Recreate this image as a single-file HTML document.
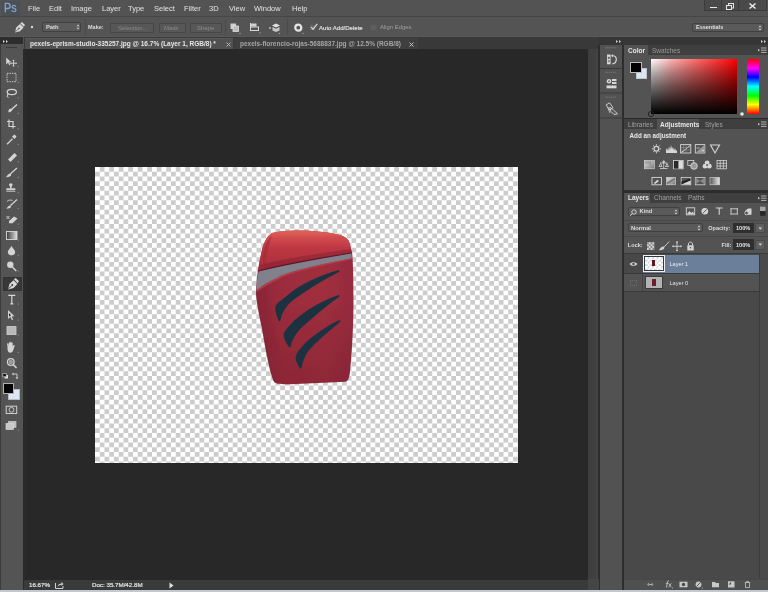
<!DOCTYPE html>
<html><head><meta charset="utf-8">
<style>
*{margin:0;padding:0;box-sizing:border-box}
html,body{width:768px;height:592px;overflow:hidden;background:#282828;font-family:"Liberation Sans",sans-serif;color:#d8d8d8}
.a{position:absolute}
.t{position:absolute;white-space:nowrap;line-height:1}
.m{font-size:7.5px;color:#e2e2e2;top:5.4px}
.b{font-weight:bold}
svg{position:absolute;overflow:visible}
.btn{position:absolute;background:#575757;border:1px solid #474747;border-radius:1px}
.dd{position:absolute;background:#5b5b5b;border:1px solid #404040;border-radius:2px}
#wrap{position:absolute;left:0;top:0;width:768px;height:592px;background:#282828;filter:blur(0.3px)}
</style></head><body><div id="wrap">
<!-- ============ MENU BAR ============ -->
<div class="a" style="left:0;top:0;width:768px;height:17px;background:#535353;border-bottom:1px solid #474747"></div>
<div class="a" style="left:1.5px;top:1px;width:18px;height:14.5px;background:#4b4f56"></div><div class="t" style="left:4.2px;top:2.2px;font-size:12.7px;color:#84a6cf;-webkit-text-stroke:0.3px #84a6cf;transform:scaleX(0.85);transform-origin:0 0">Ps</div>
<div class="t m" style="left:28px">File</div>
<div class="t m" style="left:49px">Edit</div>
<div class="t m" style="left:71px">Image</div>
<div class="t m" style="left:102px">Layer</div>
<div class="t m" style="left:128px">Type</div>
<div class="t m" style="left:154px">Select</div>
<div class="t m" style="left:184px">Filter</div>
<div class="t m" style="left:209px">3D</div>
<div class="t m" style="left:229px">View</div>
<div class="t m" style="left:254px">Window</div>
<div class="t m" style="left:292px">Help</div>
<!-- window controls -->
<div class="a" style="left:704px;top:0;width:18px;height:11px;background:#4a4a4a;border:1px solid #3c3c3c;border-top:none"></div>
<div class="a" style="left:722px;top:0;width:17px;height:11px;background:#4a4a4a;border:1px solid #3c3c3c;border-top:none;border-left:none"></div>
<div class="a" style="left:739px;top:0;width:28px;height:11px;background:#4a4a4a;border:1px solid #3c3c3c;border-top:none;border-left:none"></div>
<div class="a" style="left:710px;top:6.5px;width:7px;height:1.5px;background:#e8e8e8"></div>
<svg style="left:726px;top:2.5px" width="8" height="7"><rect x="2.5" y="0.5" width="5" height="4.5" fill="none" stroke="#e0e0e0" stroke-width="1"/><rect x="0.5" y="2.5" width="5" height="4" fill="#4a4a4a" stroke="#e8e8e8" stroke-width="1"/></svg>
<svg style="left:749px;top:3px" width="7" height="6"><path d="M0.5 0.5L6.5 5.5M6.5 0.5L0.5 5.5" stroke="#ececec" stroke-width="1.5"/></svg>

<!-- ============ OPTIONS BAR ============ -->
<div class="a" style="left:0;top:17px;width:768px;height:20px;background:#545454;border-bottom:1px solid #5a5a5a"></div>
<!-- pen icon -->
<svg style="left:14px;top:22px" width="11" height="11" viewBox="0 0 11 11"><path d="M1 10.5 L2.2 5.5 L6 2 L9.5 5.5 L6 9.2 Z" fill="#d8d8d8"/><path d="M6.3 1.2 L8 0 L11 3 L9.8 4.8Z" fill="#d8d8d8"/><path d="M1.3 10 L4.3 7" stroke="#5a5a5a" stroke-width="0.8"/><circle cx="4.8" cy="6.4" r="0.9" fill="#5a5a5a"/></svg>
<svg style="left:29.5px;top:25px" width="4" height="4"><circle cx="2" cy="2" r="1.2" fill="#d8d8d8"/></svg>

<div class="dd" style="left:42px;top:22px;width:39px;height:10px"></div>
<div class="t b" style="left:46px;top:24.5px;font-size:5.8px;color:#dedede">Path</div>
<svg style="left:76px;top:24px" width="4" height="6"><path d="M0.5 2.3L2 0.5L3.5 2.3ZM0.5 3.7L2 5.5L3.5 3.7Z" fill="#cfcfcf"/></svg>
<div class="a" style="left:84.5px;top:19px;width:1px;height:16px;background:#4a4a4a"></div>
<div class="t b" style="left:88px;top:24.8px;font-size:5.5px;color:#dcdcdc">Make:</div>
<div class="btn" style="left:109.5px;top:22.5px;width:44px;height:10px"></div>
<div class="t" style="left:118px;top:24.8px;font-size:6px;color:#8a8a8a">Selection...</div>
<div class="btn" style="left:158.5px;top:22.5px;width:27px;height:10px"></div>
<div class="t" style="left:164px;top:24.8px;font-size:6px;color:#8a8a8a">Mask</div>
<div class="btn" style="left:190px;top:22.5px;width:32px;height:10px"></div>
<div class="t" style="left:197px;top:24.8px;font-size:6px;color:#8a8a8a">Shape</div>
<div class="a" style="left:225px;top:19px;width:1px;height:16px;background:#4a4a4a"></div>
<!-- path ops icons -->
<svg style="left:230px;top:22.5px" width="11" height="11"><rect x="0.5" y="0.5" width="5.5" height="5.5" fill="#cfcfcf"/><rect x="3" y="3" width="5.5" height="5.5" fill="#bdbdbd" stroke="#e0e0e0" stroke-width="0.8"/><circle cx="10" cy="10.3" r="0.6" fill="#bbb"/></svg>
<svg style="left:249.5px;top:23px" width="11" height="11"><rect x="0.5" y="0.5" width="6" height="3" fill="#d0d0d0"/><rect x="0.5" y="4" width="8" height="3.5" fill="none" stroke="#d8d8d8" stroke-width="1"/><rect x="0" y="0" width="1" height="8" fill="#d8d8d8"/><circle cx="10" cy="9.8" r="0.6" fill="#bbb"/></svg>
<svg style="left:268px;top:22.5px" width="13" height="11"><path d="M4 2.5L8 0.5L12 2.5L8 4.5Z" fill="#e0e0e0"/><path d="M4.5 4L8 5.8L11.5 4V7.5L8 9L4.5 7.5Z" fill="#c8c8c8"/><path d="M1 5H3M2 4V6" stroke="#ccc" stroke-width="0.8"/><circle cx="11.5" cy="10.3" r="0.6" fill="#bbb"/></svg>
<div class="a" style="left:287px;top:19px;width:1px;height:16px;background:#4a4a4a"></div>
<svg style="left:293.5px;top:23.5px" width="10" height="10"><circle cx="4.3" cy="3.7" r="3" fill="none" stroke="#e6e6e6" stroke-width="2.2"/><circle cx="9" cy="9.3" r="0.6" fill="#bbb"/></svg>
<div class="a" style="left:309px;top:23.5px;width:7px;height:7px;background:#666;border:1px solid #555"></div>
<svg style="left:309.5px;top:22.5px" width="8" height="8"><path d="M1.2 4L3 6.3L7.3 0.8" fill="none" stroke="#dedede" stroke-width="1.1"/></svg>
<div class="t" style="left:319px;top:24.5px;font-size:6.05px;color:#e0e0e0;-webkit-text-stroke:0.15px #e0e0e0">Auto Add/Delete</div>
<div class="a" style="left:370px;top:23.5px;width:6.5px;height:7px;background:#5e5e5e;border:1px solid #585858"></div>
<div class="t" style="left:380px;top:24.8px;font-size:5.9px;color:#a0a0a0">Align Edges</div>
<!-- essentials -->
<div class="dd" style="left:692px;top:22.5px;width:72px;height:9.5px;background:#5a5a5a"></div>
<div class="t b" style="left:696px;top:24.8px;font-size:5.5px;color:#e0e0e0">Essentials</div>
<svg style="left:758px;top:24.5px" width="4" height="6"><path d="M0.5 2.3L2 0.5L3.5 2.3ZM0.5 3.7L2 5.5L3.5 3.7Z" fill="#d0d0d0"/></svg>

<!-- ============ TAB ROW ============ -->
<div class="a" style="left:23px;top:37px;width:575px;height:12px;background:#393939"></div>
<div class="a" style="left:24.5px;top:37.8px;width:208.5px;height:11.3px;background:#505050;border-top:1px solid #5a5a5a"></div>
<div class="t b" style="left:30px;top:41px;font-size:6.5px;color:#e4e4e4">pexels-eprism-studio-335257.jpg @ 16.7% (Layer 1, RGB/8) *</div>
<svg style="left:225.5px;top:42px" width="5" height="5"><path d="M0.5 0.5L4.5 4.5M4.5 0.5L0.5 4.5" stroke="#bdbdbd" stroke-width="0.9"/></svg>
<div class="a" style="left:234px;top:37.5px;width:184px;height:11.5px;background:#3f3f3f"></div>
<div class="t b" style="left:240px;top:41px;font-size:6.5px;color:#a4a4a4">pexels-florencio-rojas-5688837.jpg @ 12.5% (RGB/8)</div>
<svg style="left:409px;top:42px" width="5" height="5"><path d="M0.5 0.5L4.5 4.5M4.5 0.5L0.5 4.5" stroke="#d0d0d0" stroke-width="0.9"/></svg>

<!-- ============ LEFT TOOLBAR ============ -->
<div class="a" style="left:0;top:37px;width:23.8px;height:553px;background:#545454;border-left:1px solid #3c3c3c"></div>
<div class="a" style="left:0;top:37px;width:23px;height:6.5px;background:#2d2d2d"></div>
<svg style="left:2.5px;top:40px" width="6" height="3"><path d="M0 0L2 1.5L0 3ZM3 0L5 1.5L3 3Z" fill="#cfcfcf"/></svg>
<div class="a" style="left:6px;top:47px;width:11px;height:1px;background:#3a3a3a"></div>
<svg style="left:0;top:0" width="24" height="440" viewBox="0 0 24 440">
<g fill="#d4d4d4" stroke="none">
<!-- move 61.5 -->
<path d="M6.2 57.5L6.2 64.5L8 62.8L9.3 65.3L10.3 64.8L9.2 62.3L11.3 62.2Z"/>
<path d="M13.5 59.5L14.8 61H14V62.7H15.7V62L17.2 63.3L15.7 64.6V63.8H14V65.5H14.8L13.5 67L12.2 65.5H13V63.8H11.3V64.6L9.8 63.3L11.3 62V62.7H13V61H12.2Z" fill="#c8c8c8"/>
<!-- marquee 77.5 -->
<rect x="7" y="73.3" width="9" height="8.4" fill="none" stroke="#c8c8c8" stroke-width="1" stroke-dasharray="1.5 1"/>
<!-- lasso 93 -->
<ellipse cx="11.8" cy="92" rx="4.6" ry="2.7" fill="none" stroke="#d4d4d4" stroke-width="1.2"/>
<path d="M8 94L7 96.5L8.5 97.5" fill="none" stroke="#d4d4d4" stroke-width="1"/>
<!-- quick select 108.5 -->
<path d="M17 104.5L11.5 109.5" stroke="#d8d8d8" stroke-width="1.4"/>
<path d="M8.5 110C10 108 12 108.5 12.3 110C11.5 111.8 9.5 112.5 8.5 112.3Z"/>
<!-- crop 124 -->
<path d="M9 119.5V126.5H15.5M7 121.5H13V128.5" fill="none" stroke="#d4d4d4" stroke-width="1.2"/>
<!-- eyedropper 139.5 -->
<path d="M7 144.3L12.5 138.8" stroke="#d4d4d4" stroke-width="1.3"/>
<path d="M12 136.5L14.5 134.5L16.5 136.5L14.5 139Z"/>
<!-- healing 157 -->
<path d="M8 159.5L14.5 153L17 155.5L10.5 162Z"/>
<!-- brush 172.5 -->
<path d="M17 168L10.5 173.8" stroke="#d4d4d4" stroke-width="1.2"/>
<path d="M6 177.3C7 175.5 8.5 173.5 10.5 173.5C11.5 174.3 11.3 175.7 10.3 176.3C9 177 7.5 177.3 6 177.3Z"/>
<!-- stamp 188 -->
<ellipse cx="10.8" cy="184.8" rx="1.8" ry="1.6"/>
<rect x="10" y="185.5" width="1.6" height="3"/>
<rect x="6.3" y="188.3" width="9" height="2"/>
<rect x="6.3" y="191" width="9" height="1" fill="#a8a8a8"/>
<!-- history brush 204 -->
<path d="M17 199.5L10.5 205.5" stroke="#d4d4d4" stroke-width="1.2"/>
<path d="M6.5 208.8C7.5 207 8.5 205.5 10.5 205.3C11.3 206 11 207.5 10 208C9 208.6 7.8 208.8 6.5 208.8Z"/>
<path d="M7 201.5C8.5 199.8 11 199.7 12.5 200.5" fill="none" stroke="#d4d4d4" stroke-width="0.9"/>
<!-- eraser 219.5 -->
<path d="M6.5 216L9.5 219M9.5 216L6.5 219" stroke="#d4d4d4" stroke-width="0.9"/>
<path d="M9 221L14 216.5L17.5 218.5L12.5 223.3H9Z"/>
<!-- gradient 235.5 -->
<rect x="6.5" y="231.5" width="10.5" height="8" fill="url(#gr)" stroke="#d8d8d8" stroke-width="0.9"/>
<!-- drop 250.5 -->
<path d="M11.5 246C12.8 248.2 15.2 250.5 15.2 252.3C15.2 254.3 13.5 255.3 11.5 255.3C9.5 255.3 7.8 254.3 7.8 252.3C7.8 250.5 10.2 248.2 11.5 246Z"/>
<!-- dodge 266.5 -->
<circle cx="10.3" cy="264.8" r="3.2"/>
<path d="M12.3 267L16.3 271" stroke="#d4d4d4" stroke-width="1.5"/>
<!-- T 299.5 -->
<path d="M8.3 295.3H15.3M11.8 295.3V303.8M10.3 303.8H13.3" fill="none" stroke="#d8d8d8" stroke-width="1.2"/>
<!-- path select 315 -->
<path d="M8 310L8 319L10.3 317L12 320.2L13.2 319.6L11.6 316.5L14.5 316.2Z" fill="#d0d0d0"/>
<path d="M9 313L9 316.5L11 315.3Z" fill="#2d2d2d"/>
<!-- rect 330.5 -->
<rect x="7" y="326.6" width="9" height="8" fill="#b8b8b8" stroke="#d0d0d0" stroke-width="0.8"/>
<!-- hand 348 -->
<path d="M7.5 346.5L7 343.8C7 343 8.2 343 8.4 343.8L8.8 345.8V342.8C8.8 342 10.1 342 10.1 342.8V345.5V342.4C10.1 341.6 11.4 341.6 11.4 342.4V345.5V343C11.4 342.2 12.7 342.2 12.7 343V346.5L13.5 345.3C14 344.5 15 345 14.7 345.8L13.2 350.2C12.8 351.8 11.8 352.7 10.2 352.7C8.5 352.7 7.8 351.5 7.5 349.5Z"/>
<!-- zoom 363.7 -->
<circle cx="10.8" cy="362" r="3.3" fill="none" stroke="#d4d4d4" stroke-width="1.3"/>
<circle cx="10.8" cy="362" r="2.2" fill="#a0a0a0"/>
<path d="M13.2 364.5L16.5 368" stroke="#d4d4d4" stroke-width="1.6"/>
<!-- default colors -->
<rect x="4.5" y="375" width="3.5" height="3.5" fill="#e0e0e0"/>
<rect x="2.8" y="373.3" width="3.5" height="3.5" fill="#1a1a1a" stroke="#d0d0d0" stroke-width="0.6"/>
<!-- swap -->
<path d="M13 374H17V378" fill="none" stroke="#d4d4d4" stroke-width="0.9"/>
<path d="M11.8 374L13.5 372.5V375.5ZM17 379.3L15.5 377.6H18.5Z"/>
<!-- quick mask 410 -->
<rect x="6.2" y="406.2" width="10.5" height="7.3" fill="none" stroke="#d0d0d0" stroke-width="1"/>
<circle cx="11.5" cy="409.8" r="2.4" fill="none" stroke="#d0d0d0" stroke-width="0.9"/>
<!-- screen mode 425.5 -->
<rect x="8.5" y="421.3" width="7.5" height="6" fill="#bdbdbd" stroke="#cfcfcf" stroke-width="0.6"/>
<rect x="6" y="423.3" width="7.5" height="6.3" fill="#c8c8c8" stroke="#dadada" stroke-width="0.6"/>
</g>
<defs><linearGradient id="gr"><stop offset="0" stop-color="#3a3a3a"/><stop offset="1" stop-color="#e0e0e0"/></linearGradient></defs>
<!-- dots -->
<g fill="#9a9a9a">
<circle cx="18.3" cy="66.5" r="0.6"/><circle cx="18.3" cy="82.3" r="0.6"/><circle cx="18.3" cy="97.8" r="0.6"/><circle cx="18.3" cy="113.3" r="0.6"/><circle cx="18.3" cy="128.8" r="0.6"/><circle cx="18.3" cy="144.5" r="0.6"/><circle cx="18.3" cy="161.8" r="0.6"/><circle cx="18.3" cy="177.3" r="0.6"/><circle cx="18.3" cy="192.8" r="0.6"/><circle cx="18.3" cy="208.5" r="0.6"/><circle cx="18.3" cy="224" r="0.6"/><circle cx="18.3" cy="240" r="0.6"/><circle cx="18.3" cy="255.3" r="0.6"/><circle cx="18.3" cy="271" r="0.6"/><circle cx="18.3" cy="288" r="0.6"/><circle cx="18.3" cy="304" r="0.6"/><circle cx="18.3" cy="320" r="0.6"/><circle cx="18.3" cy="335" r="0.6"/><circle cx="18.3" cy="352.5" r="0.6"/><circle cx="18.3" cy="430" r="0.6"/>
</g>
</svg>
<div class="a" style="left:2.5px;top:276.5px;width:19.5px;height:14.5px;background:#383838;border:1px solid #333"></div>
<svg style="left:6.5px;top:278px" width="12" height="12" viewBox="0 0 11 11"><path d="M1 10.5 L2.2 5.5 L6 2 L9.5 5.5 L6 9.2 Z" fill="#d8d8d8"/><path d="M6.3 1.2 L8 0 L11 3 L9.8 4.8Z" fill="#d8d8d8"/><path d="M1.3 10 L4.3 7" stroke="#383838" stroke-width="0.8"/><circle cx="4.8" cy="6.4" r="0.9" fill="#383838"/></svg>
<div class="a" style="left:8.4px;top:388.7px;width:11.6px;height:11.3px;background:#dde6f4;border:1px solid #b8bcc4"></div>
<div class="a" style="left:3px;top:383px;width:10.5px;height:10.5px;background:#050505;border:1px solid #b0b0b0"></div>


<!-- ============ STATUS BAR ============ -->
<div class="a" style="left:23px;top:49px;width:2px;height:541px;background:#2a2a2a"></div>
<div class="a" style="left:24px;top:579.5px;width:564px;height:11px;background:#3a3a3a"></div>
<div class="t" style="left:29px;top:582px;font-size:6.2px;color:#e4e4e4;-webkit-text-stroke:0.2px #e4e4e4">16.67%</div>
<svg style="left:54.5px;top:581px" width="9" height="8"><path d="M0.5 2V7.5H8V5" fill="none" stroke="#d0d0d0" stroke-width="1"/><path d="M2.5 6C3 3.5 4.5 2.5 6.5 2.5V1L8.5 3L6.5 5V3.8C5 3.8 3.8 4.5 2.5 6Z" fill="#d0d0d0"/></svg>

<div class="t" style="left:92px;top:582px;font-size:6.2px;color:#e4e4e4;-webkit-text-stroke:0.2px #e4e4e4">Doc: 35.7M/42.8M</div>
<svg style="left:168.5px;top:581.5px" width="5" height="7"><path d="M0.5 0.5L4.5 3.5L0.5 6.5Z" fill="#e0e0e0"/></svg>

<!-- ============ V STRIP ============ -->
<div class="a" style="left:588px;top:49px;width:10.5px;height:541px;background:linear-gradient(to right,#3c3c3c,#444)"></div>

<!-- ============ DOCK ============ -->
<div class="a" style="left:598px;top:37px;width:170px;height:553px;background:#2d2d2d"></div><div class="a" style="left:598px;top:37px;width:170px;height:7.5px;background:#363636"></div>
<svg style="left:615.5px;top:39.5px" width="6" height="3"><path d="M0 0L2 1.5L0 3ZM3 0L5 1.5L3 3Z" fill="#cfcfcf"/></svg>
<svg style="left:760.5px;top:39.5px" width="6" height="3"><path d="M0 0L2 1.5L0 3ZM3 0L5 1.5L3 3Z" fill="#cfcfcf"/></svg>
<div class="a" style="left:600px;top:44.5px;width:22px;height:546px;background:#525252"></div>
<svg style="left:598px;top:44px" width="26" height="80" viewBox="598 44 26 80">
<g stroke="#3a3a3a" stroke-width="1"><path d="M600 68.5H622M600 93H622M600 118H622"/></g>
<g stroke="#8a8a8a" stroke-width="0.8" stroke-dasharray="1 0.8"><path d="M605.5 47.8H616.5M605.5 72.3H616.5M605.5 97.2H616.5"/></g>
<!-- icon1 history-like -->
<g fill="#d8d8d8">
<rect x="607" y="54.5" width="3.6" height="9.8"/>
<rect x="607.8" y="56.8" width="2" height="2.2" fill="#6a6a6a"/>
<rect x="607.8" y="60" width="2" height="2.2" fill="#8a8a8a"/>
<path d="M612 55.5C615.5 55.5 616.5 57.5 616.3 59.8C616 62.2 614.5 63.8 612.3 63.8" fill="none" stroke="#d8d8d8" stroke-width="1.2"/>
<path d="M611 55.8L613 54V57.6Z"/>
<!-- icon2 -->
<circle cx="609" cy="81.2" r="2.3"/>
<circle cx="609" cy="81.2" r="1" fill="#777"/>
<rect x="612" y="79" width="4.5" height="2"/><rect x="612" y="82" width="4.5" height="2"/>
<rect x="606.5" y="85.5" width="10" height="2.8"/>
<!-- icon3 -->
<path d="M606 105L609.5 102.8L613 107.5L610 110Z" fill="none" stroke="#d8d8d8" stroke-width="0.9"/>
<path d="M609.8 107.2L613.5 110L617.5 113.8L614 114.5L610.5 111Z" fill="none" stroke="#d8d8d8" stroke-width="0.9"/>
<path d="M607.5 107L610 113" stroke="#d8d8d8" stroke-width="0.8"/>
</g>
</svg>


<!-- color panel -->
<div class="a" style="left:624px;top:45px;width:144px;height:10px;background:#3f3f3f"></div>
<div class="a" style="left:624px;top:45px;width:24px;height:10px;background:#535353"></div>
<div class="t b" style="left:628px;top:47.5px;font-size:6.5px;color:#e6e6e6">Color</div>
<div class="t" style="left:652px;top:47.5px;font-size:6.5px;color:#9a9a9a">Swatches</div>
<div class="a" style="left:624px;top:55px;width:144px;height:63px;background:#535353"></div>

<svg style="left:758px;top:47px" width="9" height="7"><path d="M3 1H8.5M3 3.2H8.5M3 5.4H8.5" stroke="#bdbdbd" stroke-width="0.9"/><path d="M0 1.8L2 3.2L0 4.6Z" fill="#bdbdbd"/></svg>
<div class="a" style="left:635.5px;top:67.5px;width:11.5px;height:11.5px;background:#dbe5f4;border:1px solid #c0c4ca"></div>
<div class="a" style="left:630px;top:61.5px;width:11.5px;height:11.5px;background:#020202;border:1px solid #bdbdbd"></div>
<div class="a" style="left:651px;top:59px;width:86px;height:55px;background:linear-gradient(to bottom,rgba(0,0,0,0) 0%,rgba(0,0,0,.3) 25%,rgba(0,0,0,.56) 50%,rgba(0,0,0,.79) 75%,#000 100%),linear-gradient(to right,#fff 0%,#ffadad 25%,#ff7070 50%,#ff3838 75%,#f00 100%)"></div>
<svg style="left:647px;top:110px" width="8" height="8"><circle cx="4" cy="4" r="2.6" fill="none" stroke="#222" stroke-width="1"/></svg>
<div class="a" style="left:746.5px;top:59px;width:12.5px;height:54.5px;background:linear-gradient(to bottom,#ff0000 0%,#ff00ff 17%,#0000ff 33%,#00ffff 50%,#00ff00 67%,#ffff00 83%,#ff0000 100%)"></div>
<svg style="left:739px;top:111px" width="6" height="6"><circle cx="3" cy="3" r="1.8" fill="#e8e8e8"/></svg>
<div class="a" style="left:624px;top:118px;width:144px;height:1px;background:#2b2b2b"></div>


<!-- adjustments panel -->
<div class="a" style="left:624px;top:119px;width:144px;height:10px;background:#3f3f3f"></div>
<div class="a" style="left:657px;top:119px;width:42px;height:10px;background:#535353"></div>
<div class="t" style="left:628px;top:121.5px;font-size:6.5px;color:#a0a0a0">Libraries</div>
<div class="t b" style="left:660px;top:121.5px;font-size:6.5px;color:#e6e6e6">Adjustments</div>
<div class="t" style="left:705px;top:121.5px;font-size:6.5px;color:#a0a0a0">Styles</div>
<div class="a" style="left:624px;top:129px;width:144px;height:61px;background:#535353"></div>
<div class="t b" style="left:629.5px;top:132.5px;font-size:6.3px;color:#e8e8e8">Add an adjustment</div>
<svg style="left:758px;top:121px" width="9" height="7"><path d="M3 1H8.5M3 3.2H8.5M3 5.4H8.5" stroke="#bdbdbd" stroke-width="0.9"/><path d="M0 1.8L2 3.2L0 4.6Z" fill="#bdbdbd"/></svg>
<svg style="left:640px;top:140px" width="92" height="50" viewBox="640 140 92 50">
<defs>
<linearGradient id="g1" x1="0" x2="1"><stop offset="0" stop-color="#555"/><stop offset="1" stop-color="#e8e8e8"/></linearGradient>
<linearGradient id="g2" x1="0" y1="0" x2="1" y2="1"><stop offset="0" stop-color="#e0e0e0"/><stop offset="1" stop-color="#777"/></linearGradient>
</defs>
<g fill="#d6d6d6" stroke="#d6d6d6">
<!-- row1 -->
<circle cx="656.4" cy="148.8" r="2.4" fill="none" stroke-width="1.2"/>
<path d="M656.4 144.2V145.5M656.4 152.1V153.4M651.8 148.8H653.1M659.7 148.8H661M653.1 145.5L654 146.4M658.8 151.2L659.7 152.1M659.7 145.5L658.8 146.4M654 151.2L653.1 152.1" stroke-width="1"/>
<path d="M666 153V150L667 148L668 151L669 146.5L670 150L671 145L672 149L673 147L674 150.5L675 148L676 151L677 150V153Z" stroke="none"/>
<rect x="680.6" y="144.6" width="10.2" height="8.4" fill="none" stroke-width="0.9"/>
<path d="M681 152.5C684 151 687 148 690.5 145" fill="none" stroke-width="1"/>
<path d="M681 147.5H690M681 150H690M683.5 145V152.6M686 145V152.6" stroke="#9a9a9a" stroke-width="0.5"/>
<rect x="695.3" y="144.6" width="9.5" height="8.4" fill="none" stroke-width="0.9"/>
<path d="M695.5 152.8L704.6 144.8V152.8Z" stroke="none" fill="#999"/>
<path d="M696.5 148H699.5M702 150.5H704M703 149.5V151.5" stroke-width="0.8"/>
<path d="M710.5 145H719.5L715 153Z" fill="none" stroke-width="1.1"/>
<!-- row2 -->
<rect x="644.3" y="160.5" width="10.2" height="8.3" fill="url(#g2)" stroke-width="0.6"/>
<path d="M646 161V164M648 161V163.5M650 161V164.5" stroke="#666" stroke-width="0.7"/>
<path d="M663.7 161.5V168.5M660 168.5H667.5M660 163L667.5 163" stroke-width="0.8" fill="none"/>
<path d="M659 166.5L660.5 163.5L662 166.5Z M665.5 166.5L667 163.5L668.5 166.5Z" fill="none" stroke-width="0.8"/>
<circle cx="663.7" cy="161.8" r="1.2" stroke="none"/>
<rect x="673.6" y="160.5" width="9.6" height="8.3" fill="none" stroke-width="0.8"/>
<rect x="674" y="161" width="4.4" height="7.5" fill="#2a2a2a" stroke="none"/>
<rect x="678.5" y="161" width="4.4" height="7.5" fill="#ddd" stroke="none"/>
<rect x="687.8" y="160.5" width="6" height="5" fill="none" stroke-width="0.8"/>
<circle cx="694" cy="166" r="3.3" fill="#999" stroke-width="0.9"/>
<circle cx="707.1" cy="162.8" r="2.4" stroke="none"/>
<circle cx="705" cy="166.2" r="2.4" stroke="none"/>
<circle cx="709.3" cy="166.2" r="2.4" stroke="none"/>
<circle cx="707.1" cy="165" r="1" fill="#555" stroke="none"/>
<rect x="717" y="160.5" width="9.6" height="8.3" fill="none" stroke-width="0.8"/>
<path d="M717 163.3H726.6M717 166H726.6M720.2 160.5V168.8M723.4 160.5V168.8" stroke-width="0.8"/>
<!-- row3 -->
<rect x="652" y="177.4" width="9.5" height="7.4" fill="none" stroke-width="0.9"/>
<path d="M653.5 183.5L656.5 180.5C657.5 179.5 659 180 658.5 181.5L655.5 183.8Z" stroke="none"/>
<rect x="666.6" y="177.4" width="9" height="7.4" fill="url(#g2)" stroke-width="0.6"/>
<path d="M667 183.5L675 178.5" stroke="#777" stroke-width="1.5"/>
<rect x="681.2" y="177.4" width="9.6" height="7.4" fill="none" stroke-width="0.8"/>
<path d="M681.5 181.5L690.5 178.5V180.5L681.5 184.5Z" stroke="none" fill="#222"/>
<path d="M681.5 184.5L690.5 180.5V184.5Z" stroke="none"/>
<rect x="695.3" y="177.4" width="9.6" height="7.4" fill="none" stroke-width="0.8"/>
<path d="M695.5 177.6L700.1 181.1L704.7 177.6V184.6L700.1 181.1L695.5 184.6Z" stroke="none" fill="#8a8a8a"/>
<rect x="710" y="177.4" width="9.5" height="7.4" fill="url(#g1)" stroke-width="0.6"/>
</g>
</svg>


<!-- layers panel -->
<div class="a" style="left:624px;top:192.5px;width:144px;height:10px;background:#3f3f3f"></div>
<div class="a" style="left:624px;top:192.5px;width:26px;height:10px;background:#535353"></div>
<div class="t b" style="left:628px;top:195px;font-size:6.5px;color:#e6e6e6">Layers</div>
<div class="t" style="left:654px;top:195px;font-size:6.5px;color:#a0a0a0">Channels</div>
<div class="t" style="left:688px;top:195px;font-size:6.5px;color:#a0a0a0">Paths</div>
<div class="a" style="left:624px;top:202.5px;width:144px;height:51px;background:#535353"></div><div class="a" style="left:624px;top:253.5px;width:144px;height:325px;background:#494949"></div>
<svg style="left:758px;top:195px" width="9" height="7"><path d="M3 1H8.5M3 3.2H8.5M3 5.4H8.5" stroke="#bdbdbd" stroke-width="0.9"/><path d="M0 1.8L2 3.2L0 4.6Z" fill="#bdbdbd"/></svg>
<!-- kind row -->
<div class="dd" style="left:627.5px;top:207px;width:52.5px;height:9.2px;background:#5a5a5a"></div>
<svg style="left:629px;top:208.5px" width="8" height="7"><circle cx="5" cy="3" r="2.2" fill="none" stroke="#d8d8d8" stroke-width="0.9"/><path d="M3.5 4.5L1 6.8" stroke="#d8d8d8" stroke-width="1"/></svg>
<div class="t b" style="left:639.5px;top:209.3px;font-size:5.8px;color:#dcdcdc">Kind</div>
<svg style="left:674px;top:208.5px" width="4" height="6"><path d="M0.5 2.3L2 0.5L3.5 2.3ZM0.5 3.7L2 5.5L3.5 3.7Z" fill="#d0d0d0"/></svg>
<svg style="left:684px;top:205px" width="84" height="12" viewBox="684 205 84 12">
<g fill="#d4d4d4" stroke="#d4d4d4">
<rect x="686.3" y="207.8" width="8.4" height="7" fill="none" stroke-width="0.9"/>
<path d="M686.8 214.3L689.5 211L691.5 213L693 211.5L694.2 214.3Z" stroke="none"/>
<circle cx="704.8" cy="211.3" r="3.3" stroke="none"/>
<path d="M702.8 213.3L706.8 209.3" stroke="#5a5a5a" stroke-width="1"/>
<path d="M715.8 208H722.6M719.2 208V214.8" fill="none" stroke-width="1.1"/>
<path d="M731 208.3V214.5M737.3 208.3V214.5M730.5 208.8H737.8M730.5 214H737.8" fill="none" stroke-width="0.9"/>
<path d="M745 214.8V211L748 208.5H751.5V214.8Z" stroke="none"/>
<circle cx="746.5" cy="213" r="1.8" fill="#535353" stroke="#d4d4d4" stroke-width="0.7"/>
</g>
<rect x="760" y="206.6" width="5.6" height="9.2" fill="#2b2b2b" stroke="none"/>
<rect x="760" y="206.6" width="5.6" height="4.4" fill="#a8a8a8" stroke="none"/>
</svg>
<div class="a" style="left:624px;top:220px;width:144px;height:1px;background:#484848"></div>
<!-- blend row -->
<div class="dd" style="left:627.5px;top:223.3px;width:75.5px;height:9.2px;background:#5a5a5a"></div>
<div class="t b" style="left:631px;top:225.5px;font-size:5.8px;color:#dcdcdc">Normal</div>
<svg style="left:697px;top:225px" width="4" height="6"><path d="M0.5 2.3L2 0.5L3.5 2.3ZM0.5 3.7L2 5.5L3.5 3.7Z" fill="#d0d0d0"/></svg>
<div class="t b" style="left:708.3px;top:225.5px;font-size:5.5px;color:#dcdcdc">Opacity:</div>
<div class="a" style="left:733px;top:222.5px;width:20.5px;height:10.5px;background:#2f2f2f"></div>
<div class="t b" style="left:736px;top:225.5px;font-size:5.6px;color:#e4e4e4">100%</div>
<div class="a" style="left:754.5px;top:223px;width:10px;height:10px;background:#5e5e5e;border:1px solid #4a4a4a"></div>
<svg style="left:757.5px;top:226.5px" width="5" height="4"><path d="M0.5 0.5H4L2.25 2.8Z" fill="#d8d8d8"/></svg>
<div class="a" style="left:624px;top:236px;width:144px;height:1px;background:#484848"></div>
<!-- lock row -->
<div class="t b" style="left:627.8px;top:243px;font-size:5.6px;color:#dcdcdc">Lock:</div>
<svg style="left:645px;top:240px" width="52" height="12" viewBox="645 239 52 12">
<g fill="#d4d4d4" stroke="#d4d4d4">
<rect x="647" y="241.2" width="7.2" height="7.8" fill="#d4d4d4" stroke="none"/>
<path d="M647 241.2h1.8v1.95h-1.8zM650.6 241.2h1.8v1.95h-1.8zM648.8 243.15h1.8v1.95h-1.8zM652.4 243.15h1.8v1.95h-1.8zM647 245.1h1.8v1.95h-1.8zM650.6 245.1h1.8v1.95h-1.8zM648.8 247.05h1.8v1.95h-1.8zM652.4 247.05h1.8v1.95h-1.8z" fill="#8a8a8a" stroke="none"/>
<path d="M669.3 240.5L664 246" stroke-width="0.9"/>
<path d="M659 249.3C660 247.3 661.8 245.5 663.8 245.6C664.8 246.5 664.3 248 663 248.6C662 249.1 660.5 249.3 659 249.3Z" stroke="none"/>
<path d="M677 240.5V250M672.5 245.3H681.5" stroke-width="0.9"/>
<path d="M677 240L678.3 241.5H675.7ZM677 250.5L678.3 249H675.7ZM672 245.3L673.5 244V246.6ZM682 245.3L680.5 244V246.6Z" stroke="none"/>
<path d="M688.5 244.5V243C688.5 240.5 692.5 240.5 692.5 243V244.5" fill="none" stroke-width="1"/>
<rect x="687.3" y="244.3" width="6.4" height="5.2" stroke="none"/>
<circle cx="690.5" cy="246.8" r="0.8" fill="#555" stroke="none"/>
</g>
</svg>
<div class="t b" style="left:721.5px;top:243px;font-size:5.6px;color:#dcdcdc">Fill:</div>
<div class="a" style="left:733px;top:239px;width:20.5px;height:10.7px;background:#2f2f2f"></div>
<div class="t b" style="left:736px;top:243px;font-size:5.6px;color:#e4e4e4">100%</div>
<div class="a" style="left:754.5px;top:239.5px;width:10px;height:10px;background:#5e5e5e;border:1px solid #4a4a4a"></div>
<svg style="left:757.5px;top:243px" width="5" height="4"><path d="M0.5 0.5H4L2.25 2.8Z" fill="#d8d8d8"/></svg>
<div class="a" style="left:624px;top:252.5px;width:144px;height:1px;background:#3a3a3a"></div>
<!-- layer rows -->
<div class="a" style="left:624px;top:253.5px;width:135px;height:19px;background:#484848"></div>
<div class="a" style="left:642.5px;top:254.5px;width:116.5px;height:18px;background:#6b7f9a"></div>
<div class="a" style="left:624px;top:272.5px;width:135px;height:1px;background:#3a3a3a"></div>
<div class="a" style="left:624px;top:273.5px;width:135px;height:17.5px;background:#535353"></div>
<div class="a" style="left:624px;top:291px;width:135px;height:1px;background:#3a3a3a"></div>
<div class="a" style="left:642px;top:273.5px;width:1px;height:17.5px;background:#444"></div>
<!-- eye -->
<svg style="left:628.5px;top:261px" width="9" height="6"><path d="M0.5 3C2.5 0.5 6.5 0.5 8.5 3C6.5 5.5 2.5 5.5 0.5 3Z" fill="#cfcfcf"/><circle cx="4.5" cy="3" r="1.2" fill="#484848"/></svg>
<div class="a" style="left:630px;top:280px;width:6.7px;height:6px;border:1px dotted #6a6a6a"></div>
<!-- thumb 1 -->
<div class="a" style="left:643px;top:255px;width:22px;height:17px;background:#2f3a48;border:1px solid #f0f0f0"></div>
<div class="a" style="left:645px;top:256.7px;width:18px;height:13.8px;background-color:#fff;background-image:conic-gradient(#d8d8d8 0 25%,#ffffff 0 50%,#d8d8d8 0 75%,#ffffff 0);background-size:4.5px 4.5px"></div>
<div class="a" style="left:651.8px;top:260px;width:3.6px;height:6px;background:#5a1520"></div>
<div class="t" style="left:669.5px;top:262.3px;font-size:5.6px;color:#e8ecf2">Layer 1</div>
<!-- thumb 0 -->
<div class="a" style="left:645px;top:275.6px;width:18.2px;height:13px;background:#b3b3b3;border:1px solid #3c3c3c"></div>
<div class="a" style="left:651.5px;top:279px;width:4px;height:7px;background:#6a1f2c"></div>
<div class="t" style="left:669.5px;top:281px;font-size:5.6px;color:#e0e0e0">Layer 0</div>
<!-- scrollbar -->
<div class="a" style="left:759px;top:253.5px;width:9px;height:324.5px;background:#4a4a4a;border-left:1px solid #3c3c3c"></div>

<div class="a" style="left:624px;top:578.5px;width:144px;height:12px;background:#505050;border-top:1px solid #474747"></div><div class="a" style="left:588px;top:579px;width:10.5px;height:11.5px;background:#454545"></div>
<svg style="left:640px;top:579px" width="128" height="11" viewBox="640 579 128 11">
<g fill="#c8c8c8" stroke="#c8c8c8">
<path d="M648.5 584.5H652M648.8 583.3C647.5 583.3 647.5 585.7 648.8 585.7M651.7 583.3C653 583.3 653 585.7 651.7 585.7" fill="none" stroke-width="0.8"/>
<path d="M666.5 587.5L667.5 582C667.7 581 668.3 580.8 669 581" fill="none" stroke-width="0.9"/>
<path d="M665.8 583.5H668.3" stroke-width="0.7"/>
<path d="M668.7 583.3L671.3 587.3M671.3 583.3L668.7 587.3" stroke-width="0.8"/>
<circle cx="672.5" cy="588" r="0.5" stroke="none"/>
<rect x="679.5" y="581.7" width="8" height="5.6" stroke="none"/>
<circle cx="683.5" cy="584.5" r="1.7" fill="#4a4a4a" stroke="none"/>
<circle cx="698.5" cy="584.5" r="2.9" stroke="none"/>
<path d="M696.5 586.5L700.5 582.5" stroke="#4a4a4a" stroke-width="0.9"/>
<circle cx="702.3" cy="588" r="0.5" stroke="none"/>
<path d="M712 582H715L715.8 583H719V587.3H712Z" stroke="none"/>
<path d="M728 581.3H734.5V587.5H728Z" stroke="none"/>
<path d="M728.5 584.5L731 582V584.5Z" fill="#4a4a4a" stroke="none"/>
<path d="M744.8 582.5H750.2M745.5 583V587.5H749.5V583M746.5 582.5V581.5H748.5V582.5" fill="none" stroke-width="0.8"/>
</g>
</svg>


<!-- bottom line -->
<div class="a" style="left:0;top:590px;width:768px;height:2px;background:#c5c9ce"></div>

<!-- ============ CANVAS ============ -->
<div class="a" style="left:95px;top:167px;width:423px;height:296px;background-color:#fff;background-image:conic-gradient(#cccccc 0 25%,#ffffff 0 50%,#cccccc 0 75%,#ffffff 0);background-size:9.5px 9.5px"></div>
<svg style="left:250px;top:225px" width="110" height="165" viewBox="250 225 110 165">
<defs>
<linearGradient id="bodyg" x1="0" y1="0" x2="1" y2="0"><stop offset="0" stop-color="#872537"/><stop offset="0.25" stop-color="#9c2c3c"/><stop offset="0.7" stop-color="#a02e3e"/><stop offset="1" stop-color="#962b3d"/></linearGradient>
<linearGradient id="shd" x1="0" y1="0" x2="0" y2="1"><stop offset="0" stop-color="#000" stop-opacity="0"/><stop offset="0.45" stop-color="#000" stop-opacity="0"/><stop offset="1" stop-color="#1a0010" stop-opacity="0.13"/></linearGradient>
<linearGradient id="capg" x1="0" y1="0" x2="0" y2="1"><stop offset="0" stop-color="#e2645a"/><stop offset="0.2" stop-color="#cf4a4c"/><stop offset="0.45" stop-color="#bd3743"/><stop offset="1" stop-color="#a82d3b"/></linearGradient>
<filter id="bl" x="-10%" y="-10%" width="120%" height="120%"><feGaussianBlur stdDeviation="0.55"/></filter>
</defs>
<g filter="url(#bl)">
<path id="sil" d="M272 233C285 229 320 229.5 340 235C346 237 349 240 349.5 243L352 252C353 258 353.5 280 353.5 300C353.5 330 351.5 358 350 372C349 379 348 381 345 381.8L290 384.2C280 384.3 276 384 274.2 382C270 374 266 352 262.5 332C259.5 316 256 302 256 292C256.5 276 259 262 262 250C264 242 267 236 272 233Z" fill="url(#bodyg)"/>
<path d="M272 233C285 229 320 229.5 340 235C346 237 349 240 349.5 243L352 252C353 258 353.5 280 353.5 300C353.5 330 351.5 358 350 372C349 379 348 381 345 381.8L290 384.2C280 384.3 276 384 274.2 382C270 374 266 352 262.5 332C259.5 316 256 302 256 292C256.5 276 259 262 262 250C264 242 267 236 272 233Z" fill="url(#shd)"/>
<path d="M272 233C285 229 320 229.5 340 235C346 237 349 240 349.5 243L351.5 253L258.5 270.5C259.5 262 260.5 256 262 250C264 242 267 236 272 233Z" fill="url(#capg)"/>
<path d="M262.5 262C263 250 266 240 272 236C268 246 266 258 265.5 268Z" fill="#a02a38" opacity="0.6"/>
<path d="M259.5 265Q285 258 351 249L351.5 253.5Q286 265 259 272Z" fill="#7e2030" opacity="0.45"/><path d="M258.5 270.5Q285 263 351.5 252.5L351.5 253.5Q286 265 259 272Z" fill="#5e1824"/>
<path d="M258.8 271.5Q286 264.5 351.5 253.5L351.8 258.3Q290 270 278 277.5Q265 283 256.5 290.5C256.5 283 257.5 276 258.8 271.5Z" fill="#80818c"/>
<path d="M256.5 290.5Q265 283 278 277.5Q290 270 351.8 258.3L351.8 259.6Q291 271.5 279 279Q266 285 256.6 292.5Z" fill="#c04550" opacity="0.7"/>
<g fill="#1d3340" stroke="#1d3340" stroke-width="1.8" stroke-linejoin="round">
<path d="M338.5 271.2C320 276 297 287 287.5 296.5C282 301 276.5 304 276.2 307C276 312 277.5 316 279.4 320.4C281 312 285 305 293 299C307 289 323 279 338.5 271.2Z"/>
<path d="M338.7 296C325 300 307 310 294 322C289.5 327 284.5 331 284.6 334.8C284.8 339 287 343 289.7 346.6C291 339 295 333 300.7 327.2C310 319 323 307 338.7 296Z"/>
<path d="M339.5 321.2C330 325 312 337 304 345.7C300 350 296.3 354 296.5 357.6C296.8 361.5 298.5 364.5 300.7 367.7C302 360 304.5 355 307.4 350.8C315 341 328 331 339.5 321.2Z"/>
</g>
</g>
</svg>

</div></body></html>
